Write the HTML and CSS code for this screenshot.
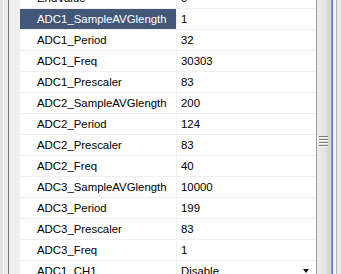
FILE: index.html
```html
<!DOCTYPE html>
<html lang="en">
<head>
    <meta charset="UTF-8">
    <title>Property Grid</title>
    <link rel="stylesheet" href="styles.css">
</head>
<body>
    <div class="frame">
        <div class="edge"></div>

        <div class="grid">
            <div class="rows">
                <div class="row"><div class="margin"></div><div class="name">EndValue</div><div class="value">0</div></div>
                <div class="row selected"><div class="margin"></div><div class="name">ADC1_SampleAVGlength</div><div class="value">1</div></div>
                <div class="row"><div class="margin"></div><div class="name">ADC1_Period</div><div class="value">32</div></div>
                <div class="row"><div class="margin"></div><div class="name">ADC1_Freq</div><div class="value">30303</div></div>
                <div class="row"><div class="margin"></div><div class="name">ADC1_Prescaler</div><div class="value">83</div></div>
                <div class="row"><div class="margin"></div><div class="name">ADC2_SampleAVGlength</div><div class="value">200</div></div>
                <div class="row"><div class="margin"></div><div class="name">ADC2_Period</div><div class="value">124</div></div>
                <div class="row"><div class="margin"></div><div class="name">ADC2_Prescaler</div><div class="value">83</div></div>
                <div class="row"><div class="margin"></div><div class="name">ADC2_Freq</div><div class="value">40</div></div>
                <div class="row"><div class="margin"></div><div class="name">ADC3_SampleAVGlength</div><div class="value">10000</div></div>
                <div class="row"><div class="margin"></div><div class="name">ADC3_Period</div><div class="value">199</div></div>
                <div class="row"><div class="margin"></div><div class="name">ADC3_Prescaler</div><div class="value">83</div></div>
                <div class="row"><div class="margin"></div><div class="name">ADC3_Freq</div><div class="value">1</div></div>
                <div class="row"><div class="margin"></div><div class="name">ADC1_CH1</div><div class="value combo">Disable<span class="arrow"></span></div></div>
            </div>
        </div>

        <div class="scrollbar">
            <div class="grip">
                <span></span><span></span><span></span><span></span>
            </div>
        </div>

        <div class="outer"></div>
    </div>
</body>
</html>
```

FILE: styles.css
```css
html, body {
    margin: 0;
    padding: 0;
    height: 100%;
}
body {
    font-family: "Liberation Sans", Arial, sans-serif;
    font-size: 11.4px;
    color: #000;
    background-color: #f0f0f0;
    overflow: hidden;
}
.frame {
    display: flex;
    height: 274px;
}
.edge {
    width: 8px;
    border-right: 1px solid #6b7888;
    background: linear-gradient(to right, #e4e4e4 0, #e4e4e4 3px, #fafafa 3px, #fafafa 4px, #ececec 4px);
}
.grid {
    flex: 1;
    overflow: hidden;
    background-color: #fff;
    border-right: 1px solid #a0a0a0;
}
.rows {
    margin-top: -12px;
}
.row {
    display: flex;
    height: 20px;
    line-height: 20px;
    border-bottom: 1px solid #f0f0f0;
}
.margin {
    width: 11px;
    flex: none;
    background-color: #f0f0f0;
}
.name {
    width: 139px;
    flex: none;
    padding-left: 17px;
    border-right: 1px solid #f0f0f0;
    white-space: nowrap;
    overflow: hidden;
}
.value {
    flex: 1;
    padding-left: 4px;
    position: relative;
}
.selected .name {
    background-color: #435879;
    color: #fff;
}
.arrow {
    position: absolute;
    right: 7px;
    top: 8px;
    border-left: 3.5px solid transparent;
    border-right: 3.5px solid transparent;
    border-top: 4px solid #000;
}
.scrollbar {
    width: 14px;
    border-right: 1px solid #a4a4a4;
    background: linear-gradient(to right, #ececec, #e2e2e2 60%, #d0d0d0);
    display: flex;
    align-items: center;
    justify-content: center;
}
.grip {
    display: flex;
    flex-direction: column;
    gap: 1px;
    width: 9px;
    margin-right: 2px;
    margin-top: 8px;
}
.grip span {
    height: 2px;
    background: linear-gradient(#7a7a7a 0, #7a7a7a 1px, #fafafa 1px);
}
.outer {
    width: 9px;
    background: linear-gradient(to right, #5a78b0 0, #5a78b0 1px, #f6f6f6 1px, #f6f6f6 4px, #b4b4b4 4px, #b4b4b4 5px, #e8e8e8 5px);
}
```
